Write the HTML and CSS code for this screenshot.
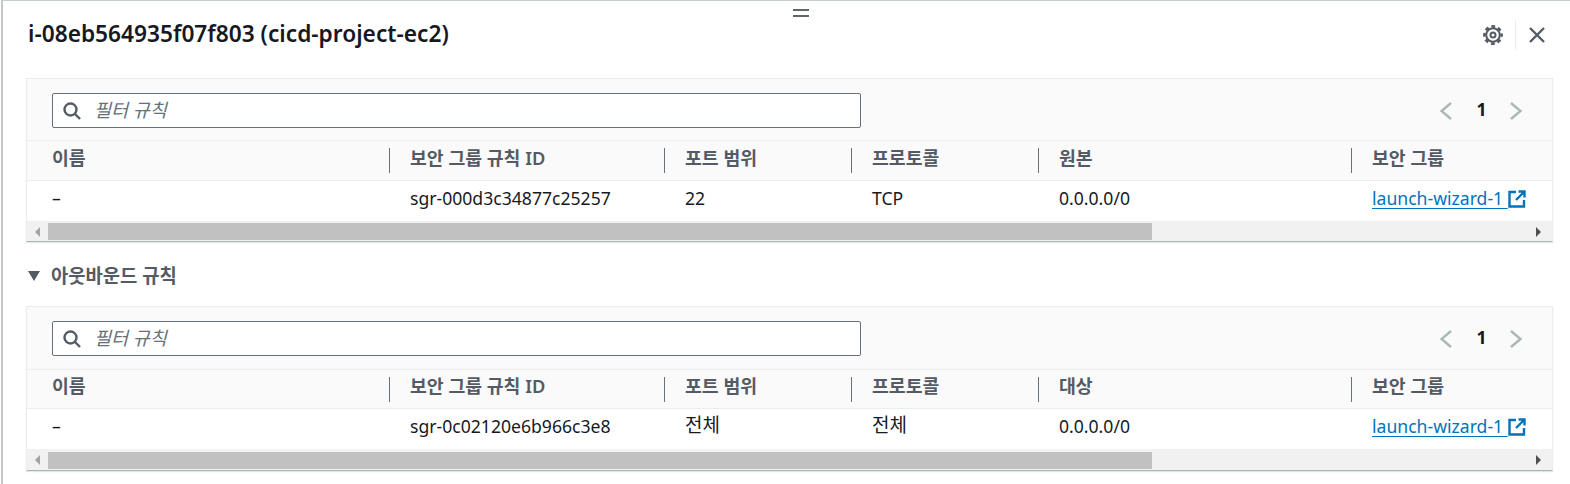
FILE: index.html
```html
<!DOCTYPE html>
<html lang="ko">
<head>
    <meta charset="UTF-8">
    <meta name="viewport" content="width=device-width, initial-scale=1.0">
    <title>i-08eb564935f07f803 (cicd-project-ec2)</title>
    <link rel="stylesheet" href="styles.css">
</head>
<body>
    <div class="panel">
        <div class="drag-handle"></div>

        <div class="panel-header">
            <h1 class="panel-title">i-08eb564935f07f803 (cicd-project-ec2)</h1>
            <div class="panel-actions">
                <svg class="icon-gear" viewBox="0 0 20 20" width="20" height="20" fill="none" stroke="#545b64">
                    <circle cx="10" cy="10" r="2.500" stroke-width="2"></circle>
                    <circle cx="10" cy="10" r="6.800" stroke-width="2"></circle>
                    <circle cx="10" cy="10" r="8.600" stroke-width="2.600" stroke-dasharray="3.700 3.055" stroke-dashoffset="1.850"></circle>
                </svg>
                <span class="action-divider"></span>
                <svg class="icon-close" viewBox="0 0 18 18" width="18" height="18" fill="none" stroke="#545b64" stroke-width="2.400">
                    <path d="M2 2l14 14M16 2L2 16"></path>
                </svg>
            </div>
        </div>

        <div class="rules-card card-inbound">
            <div class="card-toolbar">
                <div class="filter-box">
                    <svg viewBox="0 0 18 18" width="18" height="18" fill="none" stroke="#545b64" stroke-width="2.400">
                        <circle cx="7.500" cy="7.500" r="6"></circle>
                        <path d="M12 12l5 5"></path>
                    </svg>
                    <span class="filter-placeholder">필터 규칙</span>
                </div>
                <div class="pager">
                    <svg viewBox="0 0 14 20" width="14" height="20" fill="none" stroke="#aab7b8" stroke-width="2.400"><path d="M11 2L1.500 10l9.500 8"></path></svg>
                    <span class="pager-num">1</span>
                    <svg viewBox="0 0 14 20" width="14" height="20" fill="none" stroke="#aab7b8" stroke-width="2.400"><path d="M2 2l9.500 8L2 18"></path></svg>
                </div>
            </div>
            <div class="rules-row rules-head">
                <div class="cell">이름</div>
                <div class="cell">보안 그룹 규칙 ID</div>
                <div class="cell">포트 범위</div>
                <div class="cell">프로토콜</div>
                <div class="cell">원본</div>
                <div class="cell">보안 그룹</div>
            </div>
            <div class="rules-row rules-body">
                <div class="cell">–</div>
                <div class="cell">sgr-000d3c34877c25257</div>
                <div class="cell">22</div>
                <div class="cell">TCP</div>
                <div class="cell">0.0.0.0/0</div>
                <div class="cell"><a class="group-link" href="#">launch-wizard-1 </a><svg class="icon-ext" viewBox="0 0 18 18" width="18" height="18" fill="none" stroke="#0073bb" stroke-width="2.400"><path d="M8 2H1.500v14.500H16V10M10.500 1.500h6v6M16.500 1.500L8 10"></path></svg></div>
            </div>
            <div class="scrollbar">
                <span class="arrow arrow-left"></span>
                <span class="scroll-thumb"></span>
                <span class="arrow arrow-right"></span>
            </div>
        </div>

        <div class="section-title">
            <span class="caret-down"></span>
            <span>아웃바운드 규칙</span>
        </div>

        <div class="rules-card card-outbound">
            <div class="card-toolbar">
                <div class="filter-box">
                    <svg viewBox="0 0 18 18" width="18" height="18" fill="none" stroke="#545b64" stroke-width="2.400">
                        <circle cx="7.500" cy="7.500" r="6"></circle>
                        <path d="M12 12l5 5"></path>
                    </svg>
                    <span class="filter-placeholder">필터 규칙</span>
                </div>
                <div class="pager">
                    <svg viewBox="0 0 14 20" width="14" height="20" fill="none" stroke="#aab7b8" stroke-width="2.400"><path d="M11 2L1.500 10l9.500 8"></path></svg>
                    <span class="pager-num">1</span>
                    <svg viewBox="0 0 14 20" width="14" height="20" fill="none" stroke="#aab7b8" stroke-width="2.400"><path d="M2 2l9.500 8L2 18"></path></svg>
                </div>
            </div>
            <div class="rules-row rules-head">
                <div class="cell">이름</div>
                <div class="cell">보안 그룹 규칙 ID</div>
                <div class="cell">포트 범위</div>
                <div class="cell">프로토콜</div>
                <div class="cell">대상</div>
                <div class="cell">보안 그룹</div>
            </div>
            <div class="rules-row rules-body">
                <div class="cell">–</div>
                <div class="cell">sgr-0c02120e6b966c3e8</div>
                <div class="cell"><span class="cell-ko">전체</span></div>
                <div class="cell"><span class="cell-ko">전체</span></div>
                <div class="cell">0.0.0.0/0</div>
                <div class="cell"><a class="group-link" href="#">launch-wizard-1 </a><svg class="icon-ext" viewBox="0 0 18 18" width="18" height="18" fill="none" stroke="#0073bb" stroke-width="2.400"><path d="M8 2H1.500v14.500H16V10M10.500 1.500h6v6M16.500 1.500L8 10"></path></svg></div>
            </div>
            <div class="scrollbar">
                <span class="arrow arrow-left"></span>
                <span class="scroll-thumb"></span>
                <span class="arrow arrow-right"></span>
            </div>
        </div>
    </div>
</body>
</html>
```

FILE: styles.css
```css
html, body {
    margin: 0;
    height: 100%;
    overflow: hidden;
}

body {
    font-family: "Noto Sans", "Noto Sans CJK KR", sans-serif;
    font-size: 17.6px;
    color: #16191f;
    background-color: white;
}

.panel {
    position: relative;
    height: 484px;
    box-sizing: border-box;
    border-top: 1px solid #c6ced2;
    border-left: 2px solid #c4c8cb;
    margin-left: 1px;
    padding: 0 17px 0 23px;
}

.drag-handle {
    position: absolute;
    top: 8px;
    left: 790px;
    width: 16px;
    height: 4px;
    border-top: 2px solid #5f666e;
    border-bottom: 2px solid #5f666e;
}

.panel-header {
    display: flex;
    justify-content: space-between;
    align-items: center;
    height: 77px;
    padding: 0 7px 11px 2px;
    box-sizing: border-box;
}

.panel-title {
    margin: 0;
    font-size: 22.700px;
    font-weight: 600;
    line-height: 28px;
}

.panel-actions {
    display: flex;
    align-items: center;
    margin-top: 2px;
}

.action-divider {
    width: 1px;
    height: 30px;
    margin: 0 12px 0 12px;
    background-color: #eaeded;
}

.rules-card {
    width: 1527px;
    border: 1px solid #eaeded;
    border-bottom: 1px solid #aab7b8;
    box-sizing: border-box;
    background-color: white;
    box-shadow: 0 1px 1px rgba(0, 0, 0, 0.1);
}

.card-toolbar {
    display: flex;
    justify-content: space-between;
    align-items: center;
    height: 62px;
    padding: 2px 29px 0 25px;
    box-sizing: border-box;
    background-color: #fafafa;
    border-bottom: 1px solid #eaeded;
}

.filter-box {
    display: flex;
    align-items: center;
    width: 809px;
    height: 35px;
    box-sizing: border-box;
    padding-left: 10px;
    background-color: white;
    border: 1px solid #687078;
    border-radius: 2px;
}

.filter-placeholder {
    margin: 0 0 2px 13px;
    font-style: italic;
    font-size: 18.500px;
    line-height: 24px;
    color: #687078;
}

.pager {
    display: flex;
    align-items: center;
}

.pager-num {
    width: 55px;
    margin-top: -3px;
    text-align: center;
    font-size: 17.6px;
    font-weight: 700;
}

.rules-row {
    display: grid;
    grid-template-columns: 362px 275px 187px 187px 313px 1fr;
}

.rules-head {
    height: 39px;
    align-items: center;
    background-color: #fafafa;
    border-bottom: 1px solid #eaeded;
    font-size: 18.300px;
    font-weight: 600;
    color: #545b64;
}

.rules-head .cell {
    height: 25px;
    line-height: 19px;
    padding-left: 20px;
    border-left: 1px solid #687078;
}

.rules-head .cell:first-child {
    padding-left: 25px;
    border-left: none;
}

.rules-body {
    height: 40px;
    align-items: center;
}

.rules-body .cell {
    padding: 0 0 6px 21px;
    display: flex;
    align-items: center;
    line-height: 24px;
}

.rules-body .cell:first-child {
    padding-left: 25px;
}

.cell-ko {
    font-size: 19px;
    margin-top: -2px;
}

.group-link {
    color: #0073bb;
    white-space: pre;
    text-decoration: underline;
    text-underline-offset: 3px;
}

.icon-ext {
    margin: 2px 0 0;
}

.scrollbar {
    display: flex;
    align-items: center;
    height: 20px;
    background-color: #f1f1f1;
    padding-top: 1px;
    box-sizing: border-box;
}

.arrow {
    width: 0;
    height: 0;
    border-top: 5px solid transparent;
    border-bottom: 5px solid transparent;
}

.arrow-left {
    margin-left: 8px;
    border-right: 5px solid #a3a3a3;
}

.arrow-right {
    margin-left: 384px;
    border-left: 5px solid #505050;
}

.scroll-thumb {
    width: 1104px;
    height: 17px;
    margin-left: 8px;
    background-color: #c1c1c1;
}

.section-title {
    display: flex;
    align-items: center;
    height: 64px;
    padding: 2px 0 0 2px;
    box-sizing: border-box;
    font-size: 18.800px;
    font-weight: 600;
    color: #545b64;
}

.caret-down {
    width: 0;
    height: 0;
    margin: 2px 11px 0 0;
    border-left: 6px solid transparent;
    border-right: 6px solid transparent;
    border-top: 10px solid #545b64;
}

.card-outbound .card-toolbar {
    height: 63px;
    padding-bottom: 1px;
}

.card-outbound .rules-head {
    height: 38px;
}

.card-outbound .rules-head .cell {
    line-height: 17px;
}

.card-outbound .rules-body .cell {
    padding-bottom: 7px;
}

.card-outbound .scrollbar {
    height: 21px;
}
```
